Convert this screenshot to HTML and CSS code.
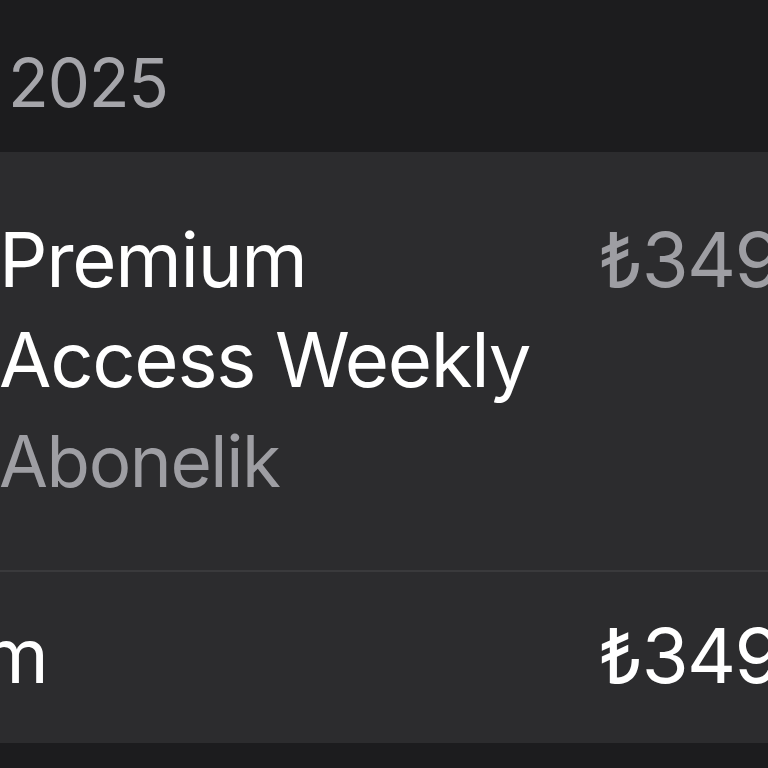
FILE: index.html
```html
<!DOCTYPE html>
<html lang="tr">
<head>
<meta charset="utf-8">
<title>Satın Alma Geçmişi</title>
<link rel="stylesheet" href="styles.css">
</head>
<body>
<div class="screen">
  <div class="sheet">
    <div class="section-header">Eylül 2025</div>
    <div class="card">
      <div class="item-row">
        <div class="app-icon"></div>
        <div class="item-text">
          <div class="item-title">Premium<br>Access Weekly</div>
          <div class="item-sub">Abonelik</div>
        </div>
        <div class="item-price">₺349,99</div>
      </div>
      <div class="separator"></div>
      <div class="total-row">
        <div class="total-label">Toplam</div>
        <div class="total-price">₺349,99</div>
      </div>
    </div>
    <div class="footer-space"></div>
  </div>
</div>
</body>
</html>
```
FILE: styles.css
```css
html, body {
  margin: 0;
  padding: 0;
  background: #1c1c1e;
}
body {
  font-family: Inter, "Noto Sans", sans-serif;
  color: #ffffff;
}
.screen {
  width: 768px;
  height: 768px;
  overflow: hidden;
}
.sheet {
  margin-left: -222px;
  width: 1127px;
}
.section-header {
  height: 80px;
  padding: 43px 0 29px 68px;
  font-size: 67px;
  line-height: 80px;
  letter-spacing: -1.2px;
  color: #a5a5aa;
  white-space: nowrap;
}
.card {
  background: #2c2c2e;
}
.item-row {
  display: flex;
  align-items: flex-start;
  padding: 57px 16px 61px 16px;
}
.app-icon {
  width: 156px;
  height: 156px;
  margin-right: 49px;
  margin-top: 20px;
  border-radius: 36px;
  background: #3a3a3c;
  flex: none;
}
.item-text {
  flex: 1;
  font-size: 76px;
  line-height: 100px;
  letter-spacing: -1.6px;
  white-space: nowrap;
}
.item-title {
  color: #ffffff;
  letter-spacing: -1.3px;
}
.item-sub {
  color: #9e9ea3;
  font-size: 71px;
  letter-spacing: -1.4px;
  margin-top: 2px;
  margin-bottom: -2px;
}
.item-price {
  font-size: 76px;
  line-height: 100px;
  letter-spacing: -1.6px;
  color: #9e9ea3;
  white-space: nowrap;
}
.separator {
  height: 2px;
  background: #3a3a3c;
}
.total-row {
  display: flex;
  justify-content: space-between;
  padding: 33px 16px 38px 16px;
  font-size: 76px;
  line-height: 100px;
  letter-spacing: -1.6px;
  white-space: nowrap;
}
.total-label, .total-price {
  color: #ffffff;
}
.footer-space {
  height: 40px;
  background: #1c1c1e;
}
```
